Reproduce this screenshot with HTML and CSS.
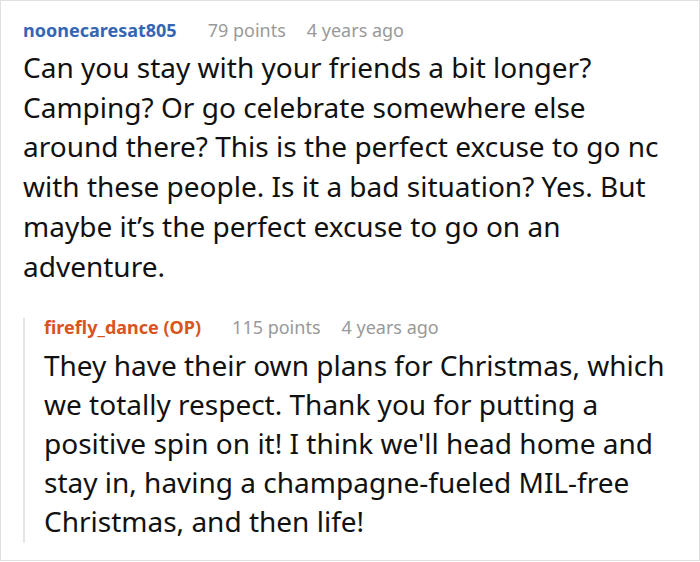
FILE: index.html
```html
<!DOCTYPE html>
<html>
<head>
<meta charset="utf-8">
<link rel="stylesheet" href="styles.css">
</head>
<body>
<div class="frame">
  <div class="comment">
    <div class="meta">
      <span class="author">noonecaresat805</span>
      <span class="info">79 points</span>
      <span class="info">4 years ago</span>
    </div>
    <p class="text">Can you stay with your friends a bit longer? Camping? Or go celebrate somewhere else around there? This is the perfect excuse to go nc with these people. Is it a bad situation? Yes. But maybe it’s the perfect excuse to go on an adventure.</p>
    <div class="reply">
      <div class="meta">
        <span class="author op">firefly_dance (OP)</span>
        <span class="info">115 points</span>
        <span class="info">4 years ago</span>
      </div>
      <p class="text reply-text">They have their own plans for Christmas, which we totally respect. Thank you for putting a positive spin on it! I think we'll head home and stay in, having a champagne-fueled MIL-free Christmas, and then life!</p>
    </div>
  </div>
</div>
</body>
</html>
```

FILE: styles.css
```css
html, body {
  margin: 0;
  padding: 0;
  background: #fff;
}
.frame {
  width: 700px;
  height: 561px;
  box-sizing: border-box;
  border: 1px solid #e0e0e0;
  overflow: hidden;
  font-family: "Noto Sans", "Open Sans", sans-serif;
  color: #111;
}
.comment {
  padding: 20px 14px 0 22px;
}
.meta {
  display: flex;
  align-items: baseline;
  gap: 21px;
  font-size: 18px;
  line-height: 18px;
}
.author {
  font-weight: 700;
  color: #3566b3;
  margin-right: 10px;
}
.author.op {
  color: #d9541e;
}
.info {
  color: #999;
}
.text {
  margin: 9px 0 0;
  font-size: 28px;
  line-height: 39.7px;
}
.reply-text {
  margin-top: 10px;
  line-height: 39px;
}
.reply {
  margin-top: 32px;
  border-left: 2px solid #e6e6e6;
  padding: 0 0 2px 19px;
}
```
